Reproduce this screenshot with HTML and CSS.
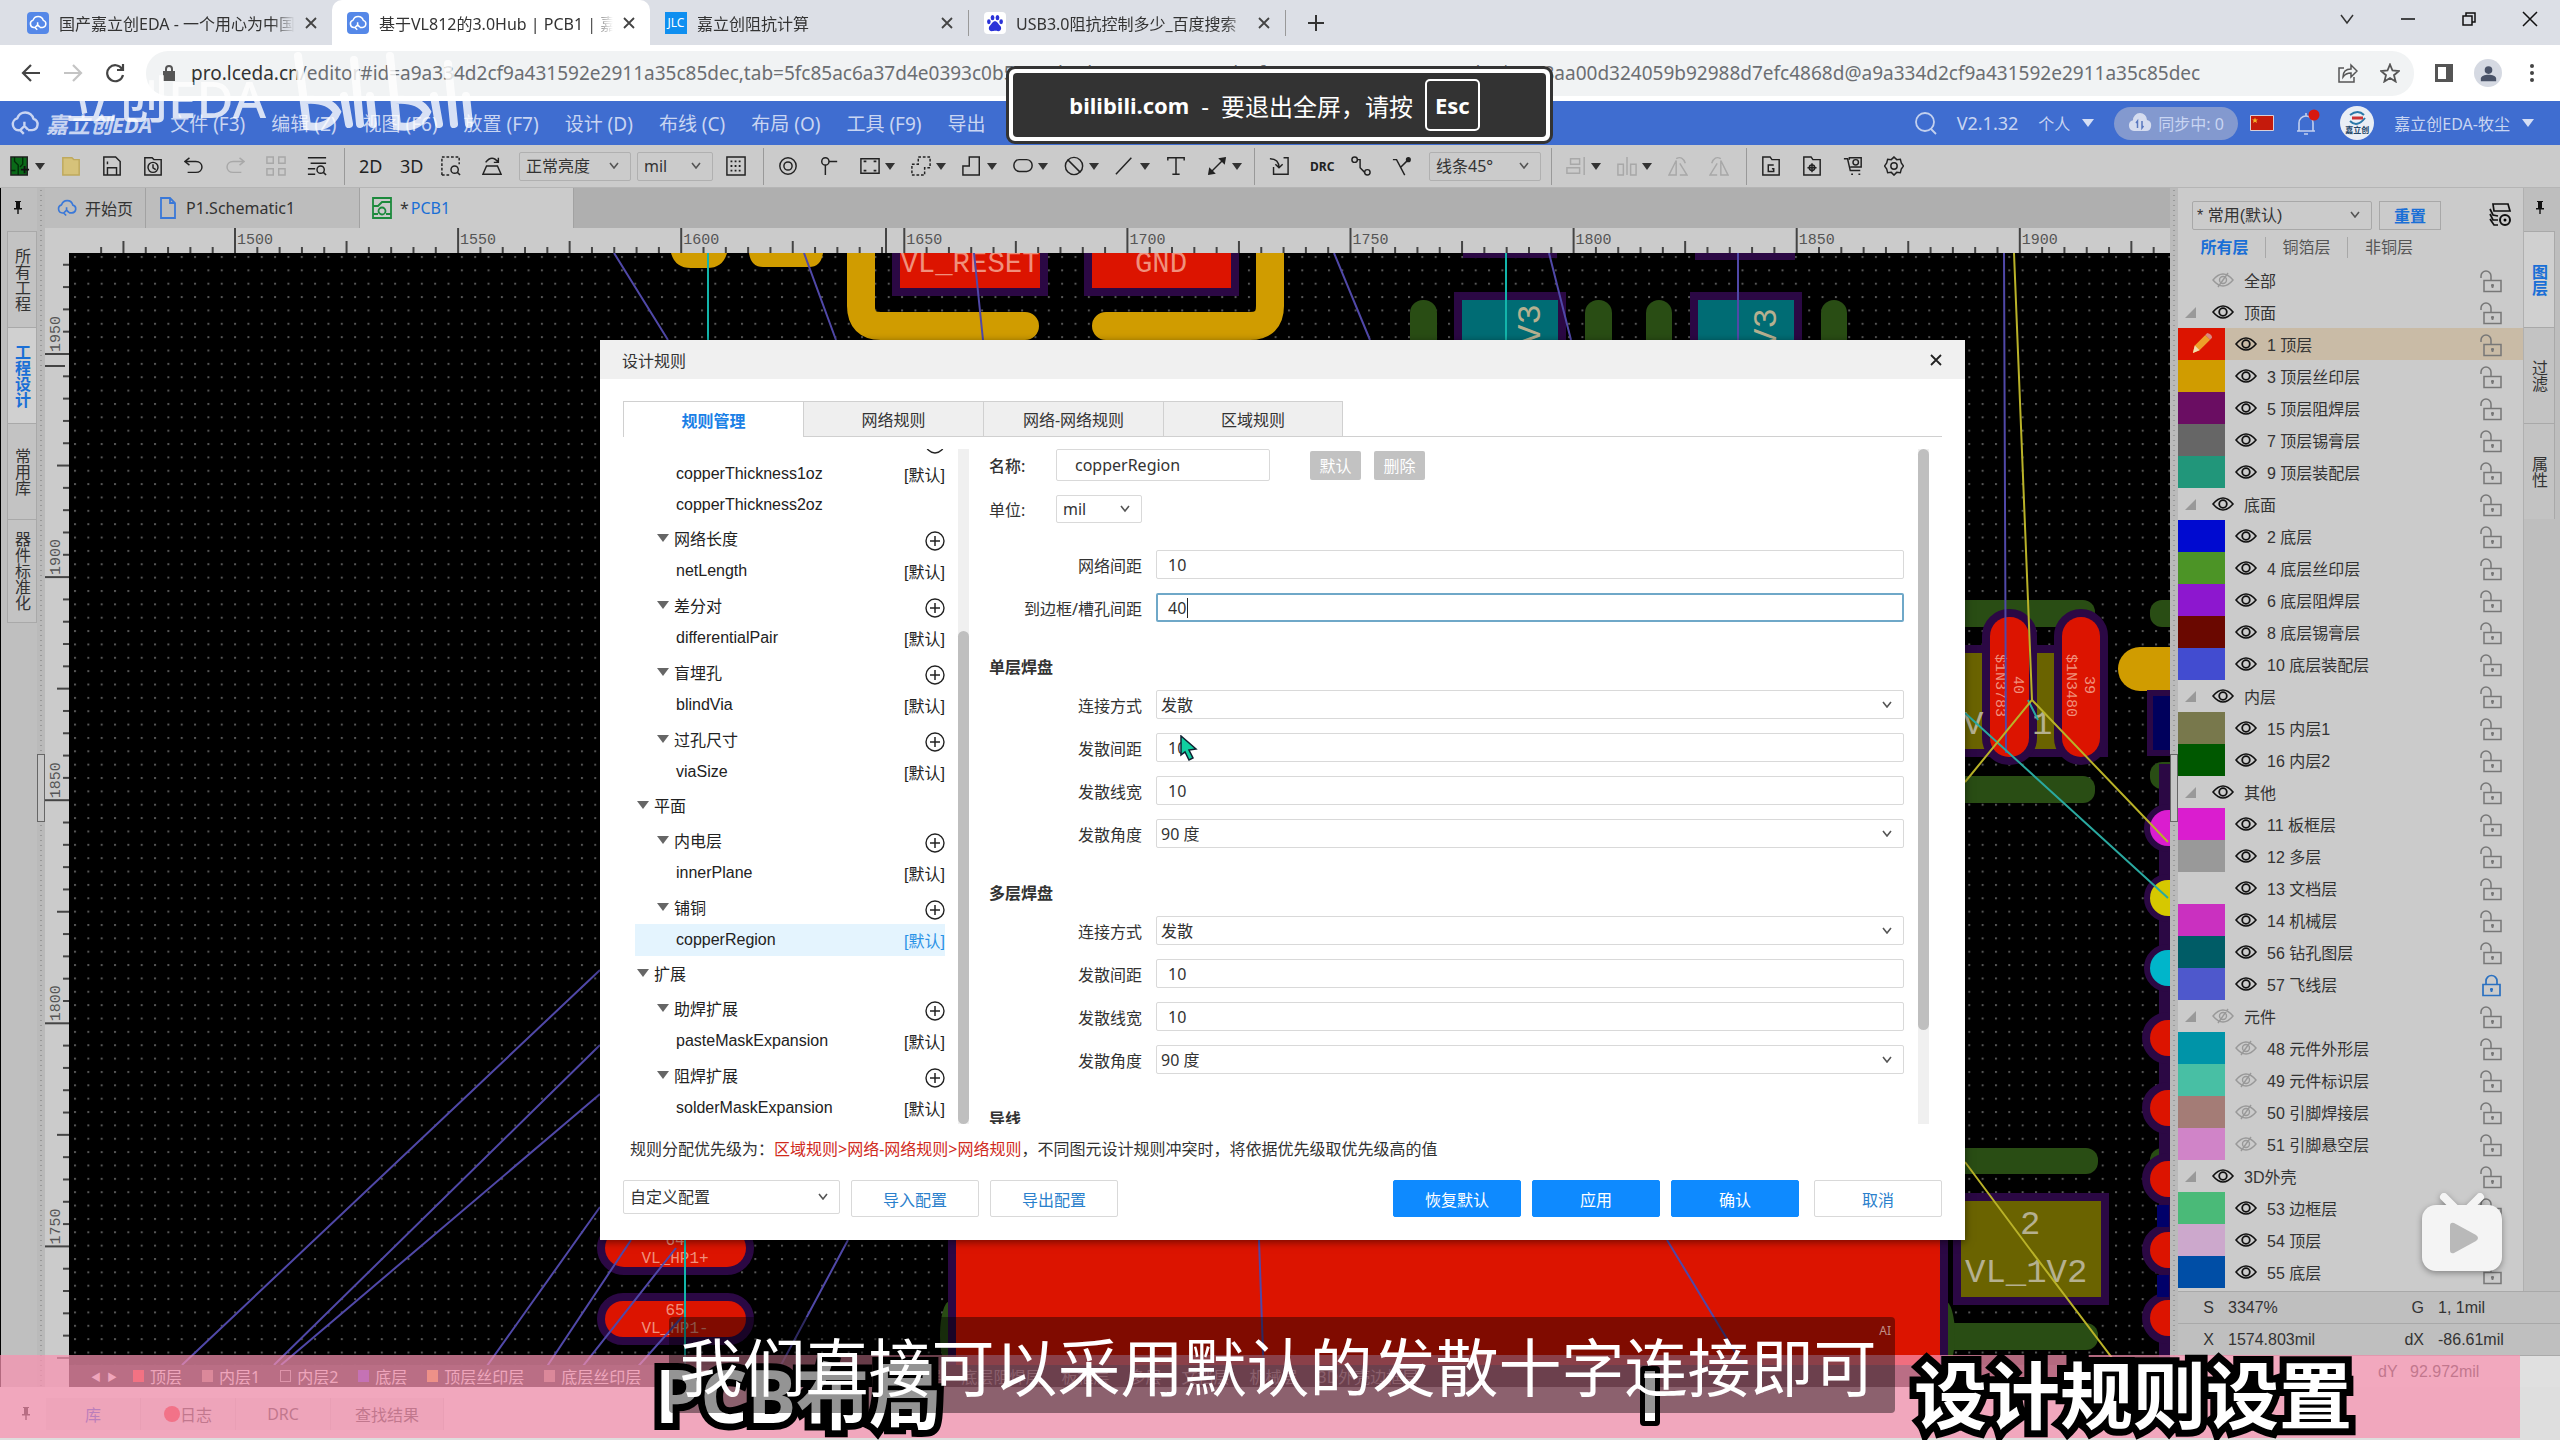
FILE: index.html
```html
<!DOCTYPE html>
<html lang="zh-CN">
<head>
    <meta charset="UTF-8">
    <title>基于VL812的3.0Hub | PCB1 | 嘉立创EDA</title>
    <link rel="stylesheet" href="styles.css">
</head>
<body>
    <!-- icon sprite -->
    <svg class="sprite" aria-hidden="true">
        <symbol id="i-cloud" viewBox="0 0 24 20"><path d="M8 16H6.500a5 5 0 0 1-1-9.800A7 7 0 0 1 19 6.500a4.800 4.800 0 0 1-1 9.400h-3.500M11 19l-3-3 3.500-3.500 3 3M11.500 12.500V9" fill="none" stroke="currentColor" stroke-width="2" stroke-linejoin="round"/></symbol>
        <symbol id="i-eye" viewBox="0 0 22 16"><path d="M1 8Q11-4 21 8Q11 20 1 8Z" fill="none" stroke="currentColor" stroke-width="1.600"/><circle cx="11" cy="8" r="3.800" fill="none" stroke="currentColor" stroke-width="1.800"/></symbol>
        <symbol id="i-eye-off" viewBox="0 0 22 16"><path d="M1 8Q11-4 21 8Q11 20 1 8ZM16 1L6 15" fill="none" stroke="currentColor" stroke-width="1.400"/><circle cx="11" cy="8" r="3.500" fill="none" stroke="currentColor" stroke-width="1.400"/></symbol>
        <symbol id="i-unlock" viewBox="0 0 24 24"><path d="M5 10.500h17v11H5zM2 8V6a5 5 0 0 1 10 0v4.500" fill="none" stroke="currentColor" stroke-width="1.500"/><path d="M13.500 14v4M12 15.500h3" stroke="currentColor" stroke-width="1.800"/></symbol>
        <symbol id="i-lock" viewBox="0 0 24 24"><path d="M4 10.500h17v11H4zM7 10.500V7a5.500 5.500 0 0 1 11 0v3.500" fill="none" stroke="currentColor" stroke-width="1.700"/><path d="M12.500 14v4M11 15.500h3" stroke="currentColor" stroke-width="1.800"/></symbol>
        <symbol id="i-plus" viewBox="0 0 20 20"><circle cx="10" cy="10" r="9" fill="none" stroke="currentColor" stroke-width="1.400"/><path d="M10 5v10M5 10h10" stroke="currentColor" stroke-width="1.500"/></symbol>
        <symbol id="i-close" viewBox="0 0 12 12"><path d="M1 1l10 10M11 1L1 11" stroke="currentColor" stroke-width="1.800"/></symbol>
        <symbol id="i-pin" viewBox="0 0 12 14"><path d="M3 0h6v1H8v6h2v1.500H6.700V13H5.300V8.500H2V7h2V1H3z" fill="currentColor"/></symbol>
    </svg>

    <header class="browser-tabs">
        <a class="browser-tab" href="#"><span class="favicon favicon-eda"><svg><use href="#i-cloud"/></svg></span><span class="tab-title">国产嘉立创EDA - 一个用心为中国人定制</span><svg class="tab-close"><use href="#i-close"/></svg></a>
        <a class="browser-tab active" href="#"><span class="favicon favicon-eda"><svg><use href="#i-cloud"/></svg></span><span class="tab-title">基于VL812的3.0Hub | PCB1 | 嘉立创</span><svg class="tab-close"><use href="#i-close"/></svg></a>
        <a class="browser-tab" href="#"><span class="favicon favicon-jlc">JLC</span><span class="tab-title">嘉立创阻抗计算</span><svg class="tab-close"><use href="#i-close"/></svg></a>
        <a class="browser-tab divided" href="#"><span class="favicon favicon-baidu"><svg viewBox="0 0 22 22"><g fill="#2a32d8"><ellipse cx="8" cy="4.500" rx="2.300" ry="3.200"/><ellipse cx="14" cy="4.500" rx="2.300" ry="3.200"/><ellipse cx="3.500" cy="9.500" rx="2.200" ry="3"/><ellipse cx="18.500" cy="9.500" rx="2.200" ry="3"/><path d="M11 9c3 0 3.500 3 6 5s2 7-2 7c-2 0-2.500-.5-4-.5s-2 .5-4 .5c-4 0-4.500-5-2-7s3-5 6-5z"/></g></svg></span><span class="tab-title">USB3.0阻抗控制多少_百度搜索</span><svg class="tab-close"><use href="#i-close"/></svg></a>
        <button class="new-tab" aria-label="新标签页"><svg viewBox="0 0 16 16"><path d="M8 0v16M0 8h16" stroke="#333" stroke-width="2"/></svg></button>
        <div class="window-buttons">
            <button aria-label="搜索标签页"><svg viewBox="0 0 16 16"><path d="M2 4l6 8 6-8" fill="none" stroke="#333" stroke-width="1.500"/></svg></button>
            <button aria-label="最小化"><svg viewBox="0 0 16 16"><path d="M1 8h14" stroke="#111" stroke-width="1.500"/></svg></button>
            <button aria-label="还原"><svg viewBox="0 0 16 16"><path d="M2 5h9v9H2zM5 5V2h9v9h-3" fill="none" stroke="#111" stroke-width="1.500"/></svg></button>
            <button aria-label="关闭"><svg viewBox="0 0 16 16"><path d="M1 1l14 14M15 1L1 15" stroke="#111" stroke-width="1.500"/></svg></button>
        </div>
    </header>

    <div class="address-bar">
        <button class="nav-btn" aria-label="后退"><svg viewBox="0 0 20 20"><path d="M19 10H2M10 2l-8 8 8 8" fill="none" stroke="#444" stroke-width="2.200"/></svg></button>
        <button class="nav-btn" aria-label="前进"><svg viewBox="0 0 20 20"><path d="M1 10h17M10 2l8 8-8 8" fill="none" stroke="#c4c4c4" stroke-width="2.200"/></svg></button>
        <button class="nav-btn" aria-label="刷新"><svg viewBox="0 0 20 20"><path d="M17 6a8 8 0 1 0 1 6M18 1v6h-6" fill="none" stroke="#444" stroke-width="2.200"/></svg></button>
        <div class="url-box">
            <svg class="url-lock" viewBox="0 0 12 16"><path d="M0 6h12v10H0z" fill="#555"/><path d="M3 7V4a3 3 0 0 1 6 0v3" fill="none" stroke="#555" stroke-width="2"/></svg>
            <span class="url"><b>pro.lceda.cn</b>/editor#id=a9a334d2cf9a431592e2911a35c85dec,tab=5fc85ac6a37d4e0393c0b52837b1d1a5c0@a9a334d2cf9a431592e2911a35c85dec|5228aa00d324059b92988d7efc4868d@a9a334d2cf9a431592e2911a35c85dec</span>
            <svg class="url-icon" viewBox="0 0 20 20"><path d="M6 5H1v14h15v-5M5 14c0-6 4-8 8-8V2l6 6-6 6v-4c-4 0-6 1-8 4z" fill="none" stroke="#555" stroke-width="1.500"/></svg>
            <svg class="url-icon" viewBox="0 0 20 20"><path d="M10 1.500l2.500 6 6.500.5-5 4.200 1.600 6.300L10 15l-5.600 3.500L6 12.200 1 8l6.500-.5z" fill="none" stroke="#555" stroke-width="1.800"/></svg>
        </div>
        <svg class="url-icon" viewBox="0 0 20 20"><path d="M1 1h18v18H1z" fill="#555"/><path d="M4 4h8v12H4z" fill="#fff"/></svg>
        <span class="profile"><svg viewBox="0 0 20 20"><circle cx="10" cy="6" r="4.500" fill="#4a5368"/><path d="M1 19v-3c0-6 18-6 18 0v3z" fill="#4a5368"/></svg></span>
        <svg class="url-icon" viewBox="0 0 20 20"><g fill="#444"><circle cx="10" cy="3" r="2"/><circle cx="10" cy="10" r="2"/><circle cx="10" cy="17" r="2"/></g></svg>
    </div>

    <nav class="menu-bar">
        <a class="brand" href="#"><svg><use href="#i-cloud"/></svg>嘉立创EDA</a>
        <a href="#">文件 (F3)</a>
        <a href="#">编辑 (Z)</a>
        <a href="#">视图 (F6)</a>
        <a href="#">放置 (F7)</a>
        <a href="#">设计 (D)</a>
        <a href="#">布线 (C)</a>
        <a href="#">布局 (O)</a>
        <a href="#">工具 (F9)</a>
        <a href="#">导出</a>
        <div class="account">
            <svg class="search" viewBox="0 0 22 24"><circle cx="10" cy="11" r="9" fill="none" stroke="#c3d0ee" stroke-width="1.800"/><path d="M16 18l5 5" stroke="#c3d0ee" stroke-width="1.800"/></svg>
            <span class="version">V2.1.32</span>
            <span>个人</span><i class="caret light"></i>
            <span class="sync"><svg viewBox="0 0 24 20"><path d="M6 18a5.500 5.500 0 0 1-1-10.800A7 7 0 0 1 19 7a5.600 5.600 0 0 1-1 11z" fill="#d5dcef"/><path d="M9.500 15V8L8 10M14 8v7l1.500-2" stroke="#5a78bf" stroke-width="1.500" fill="none"/></svg>同步中: 0</span>
            <svg class="flag" viewBox="0 0 24 16"><path d="M.5.5h23v15H.5z" fill="#c51a0c" stroke="#d9cfd8"/><path d="M5 2.500l.8 2H8L6.300 5.800 7 8 5 6.700 3 8l.7-2.200L2 4.500h2.200z" fill="#f5b52b"/></svg>
            <svg class="bell" viewBox="0 0 26 28"><path d="M3 22h18M5 22v-8a7 7 0 0 1 14 0v8M10 25h4M12 4v3" fill="none" stroke="#c3d0ee" stroke-width="1.600"/><circle cx="20" cy="6" r="5.500" fill="#d8180f"/></svg>
            <span class="avatar"><svg viewBox="0 0 34 34"><circle cx="17" cy="17" r="17" fill="#e9eef5"/><path d="M10 9q8-6 14 0M10 15q7 7 15-3" fill="none" stroke="#2a78a8" stroke-width="2"/><path d="M12 12h11" stroke="#c33" stroke-width="3"/></svg><small>嘉立创</small></span>
            <span>嘉立创EDA-牧尘</span><i class="caret light"></i>
        </div>
    </nav>

    <div class="toolbar">
        <button class="tool drop" aria-label="新建"><svg viewBox="0 0 22 22"><path d="M1 1h18v20H1z" fill="#0a6a18"/><path d="M5 1v5l4 4v11M14 1v8l-3 3M1 16h5" stroke="#032c08" stroke-width="1.500" fill="none"/><path d="M16 11v8M12 15h9" stroke="#111" stroke-width="2"/></svg></button>
        <button class="tool" aria-label="打开"><svg viewBox="0 0 22 22"><path d="M2 2h10l2 2h6v17H2z" fill="#d6c27a" stroke="#bfa95c"/></svg></button>
        <button class="tool" aria-label="保存"><svg viewBox="0 0 22 22"><path d="M2 1h13l5 5v15H2zM6 21v-8h10v8M6 6v3"/></svg></button>
        <button class="tool" aria-label="项目"><svg viewBox="0 0 22 22"><path d="M2 2h8l2 2h8v17H2z"/><circle cx="11" cy="12.500" r="5.500"/><path d="M11 9v4l3 2"/></svg></button>
        <button class="tool" aria-label="撤销"><svg viewBox="0 0 22 22"><path d="M6 2L1 6l5 4M1 6h12c9 0 9 12 0 12H4"/></svg></button>
        <button class="tool off" aria-label="重做"><svg viewBox="0 0 22 22"><path d="M16 2l5 4-5 4M21 6H9c-9 0-9 12 0 12h9"/></svg></button>
        <button class="tool off" aria-label="网格"><svg viewBox="0 0 22 22"><path d="M1 1h7v7H1zM14 1h7v7h-7zM1 14h7v7H1zM14 14h7v7h-7z"/></svg></button>
        <button class="tool" aria-label="查找"><svg viewBox="0 0 22 22"><path d="M1 2h20M4 8h17M1 14h8M1 20h8"/><circle cx="15" cy="15" r="4"/><path d="M18 18l3 3"/></svg></button>
        <i class="tool-sep"></i>
        <button class="tool text">2D</button>
        <button class="tool text">3D</button>
        <button class="tool" aria-label="框选缩放"><svg viewBox="0 0 22 22"><path d="M1 21V1h19v8M1 21h8" stroke-dasharray="3 2"/><circle cx="15" cy="15" r="4"/><path d="M18 18l3 3"/></svg></button>
        <button class="tool" aria-label="俯视"><svg viewBox="0 0 22 22"><path d="M5 11h12l4 9H1zM4 7q7-9 14 0M18 2v5h-5"/></svg></button>
        <select class="tool-select wide" aria-label="亮度"><option>正常亮度</option></select>
        <select class="tool-select" aria-label="单位"><option>mil</option></select>
        <button class="tool" aria-label="网格设置"><svg viewBox="0 0 22 22"><path d="M1 1h20v20H1z"/><path d="M5 6h13M5 11h13M5 16h13" stroke-dasharray="2 2.500" stroke-width="2"/></svg></button>
        <i class="tool-sep"></i>
        <button class="tool" aria-label="焊盘"><svg viewBox="0 0 22 22"><circle cx="11" cy="11" r="9"/><circle cx="11" cy="11" r="4.500"/></svg></button>
        <button class="tool" aria-label="过孔"><svg viewBox="0 0 22 22"><circle cx="7" cy="6" r="4"/><path d="M7 10v11M11 6h9"/></svg></button>
        <button class="tool drop" aria-label="矩形"><svg viewBox="0 0 22 22"><path d="M1 3h20v16H1z"/><path d="M4 6h3M15 6h3M4 16h3M15 16h3" stroke-width="2"/></svg></button>
        <button class="tool drop" aria-label="铺铜"><svg viewBox="0 0 22 22"><path d="M8 1h13v12h-6v8H1V9h7z" stroke-dasharray="3 2"/></svg></button>
        <button class="tool drop" aria-label="填充"><svg viewBox="0 0 22 22"><path d="M8 1h11v20H1V11h7z"/></svg></button>
        <button class="tool drop" aria-label="槽"><svg viewBox="0 0 22 22"><rect x="1" y="4" width="20" height="13" rx="6"/></svg></button>
        <button class="tool drop" aria-label="禁止区"><svg viewBox="0 0 22 22"><circle cx="11" cy="11" r="9.500"/><path d="M4 4l14 14"/></svg></button>
        <button class="tool drop" aria-label="线条"><svg viewBox="0 0 22 22"><path d="M1 20L18 2"/></svg></button>
        <button class="tool" aria-label="文本"><svg viewBox="0 0 22 22"><path d="M2 5V2h18v3M11 2v18M7 20h8"/></svg></button>
        <button class="tool drop" aria-label="尺寸"><svg viewBox="0 0 22 22"><path d="M3 19L19 3"/><path d="M2 20l1-6 5 5zM20 2l-1 6-5-5z" fill="#222"/></svg></button>
        <i class="tool-sep"></i>
        <button class="tool" aria-label="导入变更"><svg viewBox="0 0 22 22"><path d="M5 12v8h16V2h-5M1 3c7 0 10 3 10 10M7 9l4 4 4-4"/></svg></button>
        <button class="tool text small">DRC</button>
        <button class="tool" aria-label="布线"><svg viewBox="0 0 22 22"><circle cx="4" cy="4" r="3"/><circle cx="18" cy="18" r="3"/><path d="M7 4h3v9l5 5"/></svg></button>
        <button class="tool" aria-label="差分布线"><svg viewBox="0 0 22 22"><path d="M1 4h4l9 17M9 13L18 4"/><circle cx="18" cy="4" r="2" fill="#222"/></svg></button>
        <select class="tool-select wide" aria-label="拐角"><option>线条45°</option></select>
        <i class="tool-sep"></i>
        <button class="tool drop off" aria-label="对齐"><svg viewBox="0 0 22 22"><path d="M5 3h10v6H5zM1 13h14v6H1zM20 1v20"/></svg></button>
        <button class="tool drop off" aria-label="分布"><svg viewBox="0 0 22 22"><path d="M1 9h6v12H1zM15 9h6v12h-6zM11 1v20"/></svg></button>
        <button class="tool off" aria-label="左旋"><svg viewBox="0 0 22 22"><path d="M1 21L9 5v16zM13 21h8L13 8M9 3q7-4 10 5"/></svg></button>
        <button class="tool off" aria-label="右旋"><svg viewBox="0 0 22 22"><path d="M21 21L13 5v16zM9 21H1L9 8M13 3Q6-1 3 8"/></svg></button>
        <i class="tool-sep"></i>
        <button class="tool" aria-label="Gerber"><svg viewBox="0 0 22 22"><path d="M2 1h8l2 3h8v17H2zM14 10H8v7h6v-3h-2"/></svg></button>
        <button class="tool" aria-label="坐标文件"><svg viewBox="0 0 22 22"><path d="M2 1h8l2 3h8v17H2z"/><circle cx="11" cy="13" r="3"/><path d="M11 8v10M6 13h10"/></svg></button>
        <button class="tool" aria-label="下单"><svg viewBox="0 0 22 22"><path d="M1 3h4l3 13h11M7 4V2h13v10H8"/><circle cx="14" cy="7" r="3"/><path d="M9 20h2M17 20h2"/></svg></button>
        <button class="tool" aria-label="设置"><svg viewBox="0 0 22 22"><path d="M11 1l3 3 4-.5 1 4 2.500 3.500L19 14.500l-1 4-4-.5-3 3-3-3-4 .5-1-4L.5 11 3 7.500l1-4L8 4z"/><circle cx="11" cy="11" r="3.500"/></svg></button>
    </div>

    <main class="workspace">
        <aside class="side-left">
            <svg class="pin"><use href="#i-pin"/></svg>
            <button class="side-tab">所有工程</button>
            <button class="side-tab active">工程设计</button>
            <button class="side-tab">常用库</button>
            <button class="side-tab tall">器件标准化</button>
        </aside>
        <div class="splitter"><i class="grip"></i></div>

        <section class="editor">
            <div class="doc-tabs">
                <a class="doc-tab home" href="#"><svg class="blue"><use href="#i-cloud"/></svg>开始页</a>
                <a class="doc-tab" href="#"><svg class="blue" viewBox="0 0 20 22"><path d="M3 1h9l5 5v15H3zM12 1v5h5" fill="none" stroke="currentColor" stroke-width="1.800"/></svg>P1.Schematic1</a>
                <a class="doc-tab active" href="#"><svg class="green" viewBox="0 0 20 22"><path d="M1 1h18v20H1zM1 9h5l4-4h9M1 17h5M19 17h-5" fill="none" stroke="currentColor" stroke-width="1.800"/><circle cx="10" cy="14" r="3.500" fill="none" stroke="currentColor" stroke-width="1.800"/></svg>*<em>PCB1</em></a>
            </div>
            <svg class="ruler-x" id="rulerX"></svg>
            <div class="board-row">
                <svg class="ruler-y" id="rulerY"></svg>
                <svg class="board" role="img" aria-label="PCB 画布">
                    <defs>
                        <pattern id="dots" x="5" y="3" width="13.340" height="13.360" patternUnits="userSpaceOnUse"><path d="M0 0h2v2H0z" fill="#565656"/></pattern>
                    </defs>
                    <rect width="100%" height="100%" fill="#000"/>
                    <rect width="100%" height="100%" fill="url(#dots)"/>
                    <!-- board coordinates start at the window corner -->
                    <g transform="translate(-69 -253)">
                        <g class="silk">
                            <path d="M671 253q4 15 20 15h16q16 0 20-15zM749 253q2 14 14 14h46q12 0 14-14z" fill="#d09c00"/>
                            <path d="M861 240v66q0 20 20 20h144M1270 240v66q0 20-20 20h-144"/>
                        </g>
                        <g class="pad-red">
                            <rect x="900" y="235" width="140" height="53"/>
                            <rect x="1092" y="235" width="139" height="53"/>
                        </g>
                        <g class="pad-text"><text x="970" y="272">VL_RESET</text><text x="1161" y="272">GND</text></g>
                        <g class="pad-green">
                            <rect x="1410" y="300" width="27" height="60" rx="13"/><rect x="1585" y="300" width="27" height="60" rx="13"/>
                            <rect x="1646" y="300" width="26" height="60" rx="13"/><rect x="1821" y="300" width="26" height="60" rx="13"/>
                        </g>
                        <g class="pad-teal"><rect x="1462" y="300" width="96" height="60"/><rect x="1698" y="300" width="96" height="60"/></g>
                        <path d="M1463 253h94v5h-94zM1695 253h100v7h-100z" fill="#2b0844"/>
                        <g class="net-text"><text transform="translate(1540 345) rotate(-90)">V3</text><text transform="translate(1776 349) rotate(-90)">V3</text></g>

                        <g class="pad-green">
                            <rect x="1940" y="600" width="155" height="27" rx="12"/><rect x="1940" y="776" width="155" height="27" rx="12"/>
                            <rect x="2150" y="600" width="40" height="27" rx="12"/><rect x="2150" y="762" width="40" height="27" rx="12"/>
                            <rect x="1940" y="1148" width="158" height="26" rx="12"/><rect x="1940" y="1323" width="158" height="27" rx="12"/>
                            <rect x="2150" y="1148" width="40" height="26" rx="12"/>
                        </g>
                        <g class="pad-olive"><rect x="1930" y="653" width="170" height="96"/></g>
                        <g class="pad-red"><rect x="1990" y="617" width="39" height="140" rx="19"/><rect x="2062" y="617" width="38" height="140" rx="19"/></g>
                        <g class="net-text"><text x="1963" y="734">V</text><text x="2032" y="734">1</text></g>
                        <g class="pin-text"><text transform="translate(1996 654) rotate(90)">$1N3783</text><text transform="translate(2014 676) rotate(90)">40</text><text transform="translate(2067 654) rotate(90)">$1N3480</text><text transform="translate(2085 676) rotate(90)">39</text></g>
                        <rect x="2118" y="647" width="90" height="44" rx="22" fill="#d09c00"/>
                        <path d="M2150 693h30v60h-30z" fill="#00005c" stroke="#2b0844" stroke-width="6"/>
                        <g stroke="#2b0844" stroke-width="12" paint-order="stroke">
                            <path d="M2165 770h10v590h-10z" fill="#2b0844"/>
                            <circle cx="2168" cy="828" r="18" fill="#da1dcf"/><circle cx="2168" cy="898" r="18" fill="#d6c800"/><circle cx="2168" cy="968" r="18" fill="#00b5ca"/>
                        </g>
                        <g class="pad-red"><circle cx="2168" cy="1038" r="18"/><circle cx="2168" cy="1108" r="18"/><circle cx="2168" cy="1179" r="18"/><circle cx="2168" cy="1250" r="18"/><circle cx="2168" cy="1318" r="18"/></g>
                        <path d="M2157 1205h12v22h-12zM2157 1275h12v22h-12z" fill="#00006a"/>

                        <g class="pad-olive"><rect x="1961" y="1201" width="140" height="96"/></g>
                        <g class="net-text big"><text x="2020" y="1234">2</text><text x="1965" y="1282">VL_1V2</text></g>

                        <ellipse cx="950" cy="1335" rx="10" ry="34" fill="#294d14"/><ellipse cx="1945" cy="1335" rx="10" ry="34" fill="#294d14"/>
                        <g class="pad-red"><rect x="956" y="1220" width="984" height="200"/><rect x="605" y="1229" width="141" height="38" rx="19"/><rect x="605" y="1301" width="141" height="36" rx="18"/></g>
                        <g class="pad-text small"><text x="675" y="1245">64</text><text x="675" y="1263">VL_HP1+</text><text x="675" y="1315">65</text><text x="675" y="1333">VL_HP1-</text></g>

                        <g class="ratline">
                            <path d="M614 253l54 87M804 253l32 87M974 253l9 87M1334 253l36 87M1549 253l22 87M1738 253v87M2004 253l2 500"/>
                            <path d="M600 970L182 1365M600 1045L274 1365M600 1094L281 1365M600 1207L477 1380M631 1240L538 1380M676 1248L572 1380M682 1317L626 1380M848 1240L773 1380M1259 1240l5 140M1667 1240l85 140"/>
                        </g>
                        <path d="M708 253v87M685 1240v140M1506 253v87" stroke="#12b5ab" stroke-width="2"/>
                        <path d="M1965 713l203 185M2028 700l10 20" stroke="#2aa9a0" stroke-width="2"/>
                        <path d="M2014 253l18 447-67 82M2032 700l136 142M1965 1162l64 86 139 184" fill="none" stroke="#b9b228" stroke-width="2"/>
                    </g>
                </svg>
            </div>
            <div class="layer-tabs">
                <span class="arrow">◀</span><span class="arrow">▶</span>
                <span><i class="sq red"></i>顶层</span><span><i class="sq olive"></i>内层1</span><span><i class="sq dark"></i>内层2</span><span><i class="sq blue"></i>底层</span><span><i class="sq gold"></i>顶层丝印层</span><span><i class="sq olive"></i>底层丝印层</span><span>顶层锡膏层</span><span>底层锡膏层</span><span>顶层阻焊层</span><span>底层阻焊层</span><span>板框层</span><span>多层</span><span>文档层</span><span>机械层</span><span>3D外壳边框层</span>
            </div>
        </section>

        <div class="splitter"><i class="grip"></i></div>
        <aside class="layers-panel">
            <div class="layers-top">
                <select class="layers-select" aria-label="图层配置"><option>* 常用(默认)</option></select>
                <button class="reset-btn">重置</button>
                <svg class="layers-icon" viewBox="0 0 24 24"><path d="M5 1h15l2 7H6zM2 6l3 6 5 1M2 11l3 6h5M2 16l4 6h4" fill="none" stroke="#111" stroke-width="1.700"/><circle cx="17" cy="17" r="5" fill="none" stroke="#111" stroke-width="2"/><circle cx="17" cy="17" r="1.500"/></svg>
            </div>
            <div class="layers-filter"><a class="active" href="#">所有层</a><a href="#">铜箔层</a><a href="#">非铜层</a></div>
            <ul class="layer-list" id="layerList"></ul>
            <dl class="status">
                <div><dt>S</dt><dd>3347%</dd><dt>G</dt><dd>1, 1mil</dd></div>
                <div><dt>X</dt><dd>1574.803mil</dd><dt>dX</dt><dd>-86.61mil</dd></div>
                <div class="delta-y"><dt>dY</dt><dd>92.972mil</dd></div>
            </dl>
        </aside>
        <aside class="side-right">
            <svg class="pin"><use href="#i-pin"/></svg>
            <button class="side-tab active">图层</button>
            <button class="side-tab">过滤</button>
            <button class="side-tab">属性</button>
        </aside>
    </main>

    <footer class="bottom-panel">
        <svg class="pin"><use href="#i-pin"/></svg>
        <a class="active" href="#">库</a>
        <a href="#"><i class="dot"></i>日志</a>
        <a href="#">DRC</a>
        <a class="long" href="#">查找结果</a>
    </footer>

    <section class="dialog" role="dialog" aria-labelledby="dialogTitle">
        <header class="dialog-head">
            <h2 id="dialogTitle">设计规则</h2>
            <button class="dialog-close" aria-label="关闭"><svg><use href="#i-close"/></svg></button>
        </header>
        <div class="dialog-body">
            <div class="rule-tabs">
                <button class="active">规则管理</button>
                <button>网络规则</button>
                <button>网络-网络规则</button>
                <button>区域规则</button>
            </div>
            <div class="rule-content">
                <ul class="tree">
                    <li class="group"><svg><use href="#i-plus"/></svg></li>
                    <li>copperThickness1oz<span>[默认]</span></li>
                    <li class="plain">copperThickness2oz</li>
                    <li class="group"><i class="caret"></i>网络长度<svg><use href="#i-plus"/></svg></li>
                    <li>netLength<span>[默认]</span></li>
                    <li class="group"><i class="caret"></i>差分对<svg><use href="#i-plus"/></svg></li>
                    <li>differentialPair<span>[默认]</span></li>
                    <li class="group"><i class="caret"></i>盲埋孔<svg><use href="#i-plus"/></svg></li>
                    <li>blindVia<span>[默认]</span></li>
                    <li class="group"><i class="caret"></i>过孔尺寸<svg><use href="#i-plus"/></svg></li>
                    <li>viaSize<span>[默认]</span></li>
                    <li class="root"><i class="caret"></i>平面</li>
                    <li class="group"><i class="caret"></i>内电层<svg><use href="#i-plus"/></svg></li>
                    <li>innerPlane<span>[默认]</span></li>
                    <li class="group"><i class="caret"></i>铺铜<svg><use href="#i-plus"/></svg></li>
                    <li class="selected">copperRegion<span>[默认]</span></li>
                    <li class="root"><i class="caret"></i>扩展</li>
                    <li class="group"><i class="caret"></i>助焊扩展<svg><use href="#i-plus"/></svg></li>
                    <li>pasteMaskExpansion<span>[默认]</span></li>
                    <li class="group"><i class="caret"></i>阻焊扩展<svg><use href="#i-plus"/></svg></li>
                    <li>solderMaskExpansion<span>[默认]</span></li>
                </ul>
                <div class="scrollbar tree-bar"><i></i></div>
                <form class="rule-form">
                    <div class="name-row">
                        <label for="ruleName">名称:</label>
                        <input id="ruleName" type="text" value="copperRegion">
                        <button type="button" class="gray-btn">默认</button>
                        <button type="button" class="gray-btn">删除</button>
                    </div>
                    <div class="unit-row">
                        <label for="unit">单位:</label>
                        <select id="unit"><option>mil</option></select>
                    </div>
                    <div class="field"><label for="netGap">网络间距</label><input id="netGap" type="text" value="10"></div>
                    <div class="field focused"><label for="edgeGap">到边框/槽孔间距</label><input id="edgeGap" type="text" value="40"><i class="text-caret"></i></div>
                    <h3>单层焊盘</h3>
                    <div class="field"><label for="sMode">连接方式</label><select id="sMode"><option>发散</option></select></div>
                    <div class="field"><label for="sGap">发散间距</label><input id="sGap" type="text" value="10"><svg class="mouse" viewBox="0 0 18 26"><path d="M1 1v19l4-3 4 8 4-2-4-8 7-1z" fill="#10cfa0" stroke="#123" stroke-width="1.500"/></svg></div>
                    <div class="field"><label for="sWidth">发散线宽</label><input id="sWidth" type="text" value="10"></div>
                    <div class="field"><label for="sAngle">发散角度</label><select id="sAngle"><option>90 度</option></select></div>
                    <h3>多层焊盘</h3>
                    <div class="field"><label for="mMode">连接方式</label><select id="mMode"><option>发散</option></select></div>
                    <div class="field"><label for="mGap">发散间距</label><input id="mGap" type="text" value="10"></div>
                    <div class="field"><label for="mWidth">发散线宽</label><input id="mWidth" type="text" value="10"></div>
                    <div class="field"><label for="mAngle">发散角度</label><select id="mAngle"><option>90 度</option></select></div>
                    <h3>导线</h3>
                </form>
                <div class="scrollbar form-bar"><i></i></div>
            </div>
            <p class="rule-note">规则分配优先级为：<strong>区域规则&gt;网络-网络规则&gt;网络规则</strong>，不同图元设计规则冲突时，将依据优先级取优先级高的值</p>
            <div class="dialog-foot">
                <select class="config-select" aria-label="配置"><option>自定义配置</option></select>
                <button class="btn">导入配置</button>
                <button class="btn">导出配置</button>
                <span class="spacer"></span>
                <button class="btn primary">恢复默认</button>
                <button class="btn primary">应用</button>
                <button class="btn primary">确认</button>
                <button class="btn cancel">取消</button>
            </div>
        </div>
    </section>

    <!-- video layer -->
    <div class="watermark">
        <span>立创EDA</span>
        <svg viewBox="0 0 186 84"><g fill="none" stroke="#fff" stroke-width="8" stroke-linecap="round"><path d="M6 6l9 70q22 4 30-14-8-14-32-12M52 46l5 28M62 10l6 64M78 46l3 28M98 6l7 70q22 4 30-14-8-14-32-12M142 46l5 28M156 14l6 60M174 46l3 28"/></g></svg>
    </div>
    <div class="chapter-bar">
        <span class="chapter first">PCB布局</span>
        <i class="chapter-mark"></i>
        <span class="chapter last">设计规则设置</span>
    </div>
    <div class="caption">我们直接可以采用默认的发散十字连接即可<small>AI</small></div>
    <button class="play-btn" aria-label="播放"><svg viewBox="0 0 80 80"><path d="M22 4l12 12M58 4L46 16" stroke="#f4f4f4" stroke-width="8" stroke-linecap="round"/><rect y="12" width="80" height="66" rx="14" fill="#f4f4f4"/><path d="M28 33q0-4 4-3l22 12q4 3 0 6L32 60q-4 1-4-3z" fill="#b9b9b9"/></svg></button>
    <div class="fullscreen-tip"><div><b>bilibili.com</b><span>-</span><span>要退出全屏，请按</span><kbd>Esc</kbd></div></div>

    <script src="script.js"></script>
</body>
</html>
```

FILE: styles.css
```css
* {
    box-sizing: border-box;
}
body {
    margin: 0;
    height: 100vh;
    display: flex;
    flex-direction: column;
    position: relative;
    overflow: hidden;
    font-family: "Noto Sans", "Noto Sans CJK SC", sans-serif;
    font-size: 16px;
    color: #333;
    background-color: #cbcbcb;
}
a {
    color: inherit;
    text-decoration: none;
}
button, input, select {
    font: inherit;
    color: inherit;
}
button {
    padding: 0;
    border: none;
    background: none;
    cursor: pointer;
}
select {
    appearance: none;
    border: 1px solid #d9d9d9;
    border-radius: 2px;
    padding: 0 4px;
    background: #fff url("data:image/svg+xml,%3Csvg xmlns='http://www.w3.org/2000/svg' width='10' height='8'%3E%3Cpath d='M1 1l4 5 4-5' fill='none' stroke='%23555' stroke-width='1.600'/%3E%3C/svg%3E") no-repeat right 11px center;
}
ul, dl, dd, h2, h3, p {
    margin: 0;
    padding: 0;
    list-style: none;
}
svg {
    display: block;
    flex: none;
}
.sprite {
    position: absolute;
    width: 0;
    height: 0;
}
.caret {
    flex: none;
    width: 0;
    height: 0;
    border: 6px solid transparent;
    border-top: 8px solid #666;
    border-bottom: 0;
}
.caret.light {
    margin-left: -8px;
    border-top-color: #d5def5;
}
.pin {
    width: 12px;
    height: 14px;
    color: #111;
}

/* browser */
.browser-tabs {
    flex: none;
    display: flex;
    height: 45px;
    background-color: #dcdfe6;
}
.browser-tab {
    display: flex;
    align-items: center;
    width: 318px;
    padding: 0 15px;
    gap: 10px;
    position: relative;
}
.browser-tab:first-child {
    width: 332px;
    padding-left: 27px;
}
.browser-tab.active {
    background-color: #fff;
    border-radius: 10px 10px 0 0;
}
.browser-tab.divided {
    border-left: 1px solid #999;
    border-right: 1px solid #999;
    height: 26px;
    margin-top: 10px;
}
.favicon {
    flex: none;
    width: 22px;
    height: 22px;
    border-radius: 4px;
    display: flex;
    align-items: center;
    justify-content: center;
}
.favicon svg {
    width: 18px;
    height: 18px;
}
.favicon-eda {
    background-color: #5588e8;
    color: #fff;
}
.favicon-jlc {
    background-color: #0f8ff0;
    color: #fff;
    font-size: 12px;
    border-radius: 0;
}
.favicon-baidu {
    background-color: #fff;
}
.tab-title {
    flex: 1;
    overflow: hidden;
    white-space: nowrap;
    mask-image: linear-gradient(to left, transparent, #000 24px);
}
.tab-close {
    width: 12px;
    height: 12px;
    color: #444;
}
.new-tab {
    width: 60px;
}
.new-tab svg {
    width: 16px;
    height: 16px;
    margin: 0 auto;
}
.window-buttons {
    margin-left: auto;
    display: flex;
    height: 38px;
}
.window-buttons button {
    width: 61px;
}
.window-buttons svg {
    width: 16px;
    height: 16px;
    margin: 0 auto;
}
.address-bar {
    flex: none;
    display: flex;
    align-items: center;
    gap: 20px;
    height: 56px;
    padding: 0 18px 0 20px;
    background-color: #fff;
}
.nav-btn svg {
    width: 22px;
    height: 20px;
}
.url-box {
    flex: 1;
    display: flex;
    align-items: center;
    gap: 22px;
    height: 45px;
    padding: 0 14px 0 17px;
    border-radius: 22px;
    background-color: #f1f3f4;
}
.url-lock {
    width: 12px;
    height: 16px;
}
.url {
    flex: 1;
    overflow: hidden;
    white-space: nowrap;
    font-size: 19px;
    color: #6b6e72;
    margin-left: -6px;
}
.url b {
    font-weight: normal;
    color: #333;
}
.url-icon {
    width: 20px;
    height: 20px;
}
.profile {
    width: 28px;
    height: 28px;
    border-radius: 50%;
    background-color: #d5d9e2;
    display: flex;
    align-items: center;
    justify-content: center;
}
.profile svg {
    width: 17px;
    height: 17px;
}

/* app menu */
.menu-bar {
    flex: none;
    display: flex;
    align-items: center;
    gap: 26px;
    height: 44px;
    padding: 0 26px 0 10px;
    background-color: #3f6dd0;
    color: #c9d5f2;
    font-size: 19px;
    white-space: nowrap;
}
.brand {
    display: flex;
    align-items: center;
    gap: 6px;
    font-size: 22px;
    font-style: italic;
    font-weight: bold;
    margin-right: -8px;
}
.brand svg {
    width: 30px;
    height: 24px;
}
.account {
    margin-left: auto;
    display: flex;
    align-items: center;
    gap: 20px;
    font-size: 16px;
}
.search {
    width: 22px;
    height: 24px;
}
.version {
    font-size: 18px;
}
.sync {
    display: flex;
    align-items: center;
    gap: 6px;
    width: 124px;
    height: 33px;
    padding: 0 14px;
    border-radius: 17px;
    background-color: #8399cf;
    margin-right: -8px;
}
.sync svg {
    width: 24px;
    height: 20px;
}
.flag {
    width: 24px;
    height: 16px;
}
.bell {
    width: 26px;
    height: 28px;
}
.avatar {
    position: relative;
    width: 34px;
    height: 34px;
}
.avatar small {
    position: absolute;
    left: 5px;
    bottom: 5px;
    font-size: 8px;
    line-height: 10px;
    font-weight: bold;
    color: #246;
}

/* toolbar */
.toolbar {
    flex: none;
    display: flex;
    align-items: center;
    height: 43px;
    padding-left: 10px;
    border-bottom: 1px solid #b5b5b5;
    background-color: #cbcbcb;
}
.tool {
    flex: none;
    width: 41px;
    color: #222;
    text-align: left;
}
.tool svg {
    width: 20px;
    height: 20px;
    fill: none;
    stroke: #222;
    stroke-width: 1.600;
}
.tool.off svg {
    stroke: #a8a8a8;
}
.tool.drop {
    display: flex;
    align-items: center;
    gap: 5px;
    width: 51px;
}
.tool.drop::after {
    content: "";
    border: 5px solid transparent;
    border-top: 7px solid #333;
    border-bottom: 0;
}
.tool.text {
    font-size: 18px;
}
.tool.text.small {
    font-size: 12px;
    font-weight: bold;
}
.tool-sep {
    flex: none;
    width: 1px;
    height: 37px;
    margin: 0 14px 0 -4px;
    background-color: #999;
}
.tool-select {
    width: 76px;
    height: 29px;
    margin-right: 13px;
    padding: 0 6px;
    background-color: transparent;
    border-color: #b0b0b0;
}
.tool-select.wide {
    width: 112px;
    margin: 0 6px 0 -4px;
}
.tool-select.wide + .tool-sep {
    margin-left: 4px;
}

/* workspace */
.workspace {
    flex: 1;
    min-height: 0;
    display: flex;
    position: relative;
    z-index: 0;
}
.side-left {
    width: 37px;
    padding-left: 6px;
    background-color: #bfbfbf;
    border-left: 1px solid #000;
}
.side-left .pin {
    margin: 13px 0 16px 5px;
}
.side-right {
    width: 37px;
    background-color: #bebebe;
    padding-right: 5px;
    border-left: 1px solid #b0b0b0;
}
.side-right .pin {
    margin: 13px 0 16px 10px;
}
.side-tab {
    display: block;
    width: 100%;
    height: 96px;
    border: 1px solid #a9a9a9;
    border-bottom: none;
    background-color: #c3c3c3;
    writing-mode: vertical-rl;
    text-align: center;
}
.side-tab.tall {
    height: 104px;
    border-bottom: 1px solid #a9a9a9;
}
.side-tab.active {
    background-color: #d0d0d0;
    color: #1a6fd6;
    font-weight: bold;
}
.side-right .side-tab {
    border-left: none;
}
.splitter {
    flex: none;
    width: 8px;
    display: flex;
    align-items: center;
    background: radial-gradient(circle, #999 1px, transparent 1px) 0 0 / 8px 5px #bababa;
}
.grip {
    width: 8px;
    height: 68px;
    border: 1px solid #666;
    background-color: #c6c6c6;
}
.editor {
    flex: 1;
    min-width: 0;
    display: flex;
    flex-direction: column;
}
.doc-tabs {
    flex: none;
    display: flex;
    height: 40px;
    background-color: #afafaf;
}
.doc-tab {
    display: flex;
    align-items: center;
    gap: 8px;
    width: 214px;
    padding-left: 12px;
    border-right: 1px solid #a2a2a2;
    background-color: #bdbdbd;
    white-space: nowrap;
}
.doc-tab.home {
    width: 101px;
}
.doc-tab.active {
    background-color: #cbcbcb;
    gap: 2px;
}
.doc-tab svg {
    width: 20px;
    height: 22px;
}
.doc-tab.active svg {
    margin-right: 6px;
}
.doc-tab em {
    font-style: normal;
    color: #1a6fd6;
}
.blue {
    color: #3a78d8;
}
.green {
    color: #1c8a3c;
}
.ruler-x {
    width: 100%;
    height: 25px;
    background-color: #cbcbcb;
}
.board-row {
    flex: 1;
    min-height: 0;
    display: flex;
}
.ruler-y {
    width: 24px;
    height: 100%;
    background-color: #cbcbcb;
}
.ruler-x line, .ruler-y line {
    stroke: #444;
    stroke-width: 2;
}
.ruler-x text, .ruler-y text {
    font-family: "Liberation Mono", monospace;
    font-size: 15px;
    fill: #555;
}
.board {
    flex: 1;
    min-width: 0;
    height: 100%;
}
.silk {
    fill: none;
    stroke-linecap: round;
}
.silk path:last-child {
    stroke: #d09c00;
    stroke-width: 28;
}
.pad-red {
    fill: #dc1400;
}
.pad-green {
    fill: #294d14;
}
.pad-teal {
    fill: #006c74;
}
.pad-olive {
    fill: #6a6300;
}
.pad-red, .pad-teal, .pad-olive {
    stroke: #2b0844;
    stroke-width: 16;
    paint-order: stroke;
}
.pad-text {
    font-family: "Liberation Mono", monospace;
    font-size: 29px;
    fill: #f0907c;
    text-anchor: middle;
}
.pad-text.small {
    font-size: 16px;
}
.net-text {
    font-family: "Liberation Mono", monospace;
    font-size: 34px;
    fill: #b5b090;
}
.pin-text {
    font-family: "Liberation Mono", monospace;
    font-size: 15px;
    fill: #f0907c;
}
.ratline {
    fill: none;
    stroke: #5048a8;
    stroke-width: 2;
}
.layer-tabs {
    flex: none;
    display: flex;
    align-items: center;
    gap: 20px;
    height: 22px;
    padding-left: 32px;
    overflow: hidden;
    white-space: nowrap;
    background-color: #1b1418;
    color: #d8d8d8;
    border-left: 24px solid #cbcbcb;
}
.layer-tabs span {
    display: flex;
    align-items: center;
    gap: 6px;
}
.layer-tabs .arrow {
    font-size: 10px;
    margin: 0 -4px 0 -10px;
}
.sq {
    width: 11px;
    height: 12px;
}
.sq.red { background-color: #e02010; }
.sq.olive { background-color: #907060; }
.sq.dark { border: 1px solid #999; }
.sq.blue { background-color: #4020c0; }
.sq.gold { background-color: #d09020; }

/* layers panel */
.layers-panel {
    flex: none;
    display: flex;
    flex-direction: column;
    width: 345px;
    background-color: #cbcbcb;
    font-family: "Liberation Sans", "Noto Sans CJK SC", sans-serif;
}
.layers-top {
    display: flex;
    align-items: center;
    gap: 7px;
    height: 42px;
    padding: 12px 11px 0 14px;
}
.layers-select {
    width: 180px;
    height: 29px;
    background-color: transparent;
    border-color: #a8a8a8;
}
.reset-btn {
    width: 62px;
    height: 29px;
    border: 1px solid #a8a8a8;
    color: #1a6fd6;
    font-weight: bold;
}
.layers-icon {
    width: 24px;
    height: 24px;
    margin-left: auto;
}
.layers-filter {
    display: flex;
    align-items: center;
    height: 34px;
    padding-left: 6px;
}
.layers-filter a {
    width: 82px;
    line-height: 21px;
    text-align: center;
    border-right: 1px solid #a8a8a8;
    color: #555;
}
.layers-filter a:last-child {
    border-right: none;
}
.layers-filter .active {
    color: #1a6fd6;
    font-weight: bold;
}
.layer-list {
    flex: 1;
    overflow: hidden;
}
.layer-row {
    display: flex;
    align-items: center;
    height: 32px;
    padding-right: 20px;
}
.layer-row .swatch {
    width: 47px;
    height: 32px;
    margin-right: 10px;
    padding: 4px 12px;
}
.layer-row .fold {
    width: 0;
    height: 0;
    margin: 0 16px 0 7px;
    border-left: 11px solid transparent;
    border-bottom: 11px solid #999;
}
.layer-row .fold.none {
    visibility: hidden;
}
.layer-row .eye {
    width: 22px;
    height: 16px;
    color: #111;
}
.layer-row .eye.off {
    color: #999;
}
.layer-row span {
    flex: 1;
    padding-left: 10px;
}
.layer-row .lock {
    width: 24px;
    height: 24px;
    margin-top: 4px;
    color: #777;
}
.layer-row .lock.on {
    color: #2a70c0;
}
.layer-row.current {
    background-color: #c9bba6;
}
.status {
    flex: none;
    margin-right: -37px;
    z-index: 1;
    background-color: #bfbfbf;
}
.status div {
    display: grid;
    grid-template-columns: 36px 136px 46px 1fr;
    column-gap: 14px;
    align-items: center;
    height: 32px;
    border-top: 1px solid #a9a9a9;
}
.status .delta-y {
    padding-left: 200px;
    grid-template-columns: 18px 1fr;
    background-color: #e0e0e0;
}
.status dt {
    text-align: right;
}

/* bottom panel */
.bottom-panel {
    flex: none;
    display: flex;
    align-items: center;
    height: 53px;
    background-color: #dedede;
}
.bottom-panel .pin {
    margin: 0 14px 0 20px;
}
.bottom-panel a {
    display: flex;
    align-items: center;
    justify-content: center;
    width: 95px;
    height: 32px;
    border-right: 1px solid #c2c2c2;
    background-color: #d2d2d2;
}
.bottom-panel .long {
    width: 113px;
}
.bottom-panel .active {
    color: #1a4fd6;
}
.dot {
    width: 16px;
    height: 16px;
    border-radius: 50%;
    background-color: #e02020;
}

/* design rule dialog */
.dialog {
    position: absolute;
    left: 600px;
    top: 340px;
    width: 1365px;
    background-color: #fff;
    box-shadow: 0 2px 8px rgba(0,0,0,0.5);
}
.dialog-head {
    display: flex;
    align-items: center;
    justify-content: space-between;
    height: 39px;
    padding: 0 23px 0 22px;
    background-color: #f0f0f0;
}
.dialog-head h2 {
    font-size: 16px;
    font-weight: normal;
}
.dialog-close svg {
    width: 12px;
    height: 12px;
    color: #222;
}
.dialog-body {
    padding: 22px 23px 23px;
}
.rule-tabs {
    display: flex;
    border-bottom: 1px solid #d0d0d0;
}
.rule-tabs button {
    width: 180px;
    height: 35px;
    border: 1px solid #d0d0d0;
    border-right: none;
    border-bottom: none;
    background-color: #efefef;
}
.rule-tabs button:last-child {
    border-right: 1px solid #d0d0d0;
}
.rule-tabs .active {
    margin-bottom: -1px;
    height: 36px;
    background-color: #fff;
    color: #1a80e6;
    font-weight: bold;
}
.rule-content {
    display: flex;
    height: 675px;
    margin-top: 12px;
    overflow: hidden;
}
.tree {
    display: flex;
    flex-direction: column;
    justify-content: flex-end;
    width: 322px;
    padding-left: 12px;
    font-family: "Liberation Sans", "Noto Sans CJK SC", sans-serif;
    color: #222;
}
.tree li {
    flex: none;
    display: flex;
    align-items: center;
    height: 32px;
    padding-left: 41px;
}
.tree .plain {
    height: 30px;
}
.tree .group {
    height: 35px;
    padding-left: 22px;
    gap: 5px;
}
.tree .root {
    height: 34px;
    padding-left: 2px;
    gap: 5px;
}
.tree li span, .tree li svg {
    margin-left: auto;
}
.tree li svg {
    width: 20px;
    height: 20px;
    margin-top: 6px;
}
.tree .selected {
    background-color: #e4f4fe;
}
.tree .selected span {
    color: #2a92e6;
}
.scrollbar {
    flex: none;
    width: 11px;
    background-color: #f0f0f0;
}
.scrollbar i {
    display: block;
    border-radius: 6px;
    background-color: #bfbfbf;
}
.tree-bar {
    display: flex;
    align-items: flex-end;
    margin: 0 20px 0 13px;
}
.tree-bar i {
    width: 11px;
    height: 73%;
}
.form-bar {
    margin: 0 13px 0 14px;
}
.form-bar i {
    height: 86%;
}
.rule-form {
    flex: 1;
}
.rule-form input {
    border: 1px solid #d9d9d9;
    border-radius: 2px;
    padding: 0 11px;
    background-color: #fff;
}
.name-row, .unit-row {
    display: flex;
    align-items: center;
}
.name-row {
    margin-bottom: 14px;
    gap: 13px;
}
.name-row label, .unit-row label {
    width: 67px;
}
.name-row label {
    margin-right: -13px;
    font-weight: 500;
}
.name-row input {
    width: 214px;
    height: 32px;
    padding-left: 18px;
    margin-right: 27px;
}
.gray-btn {
    width: 51px;
    height: 29px;
    border-radius: 2px;
    background-color: #c2c2c2;
    color: #fff;
}
.unit-row {
    margin-bottom: 27px;
}
.unit-row select {
    width: 86px;
    height: 28px;
    padding: 0 6px;
}
.field {
    position: relative;
    display: flex;
    align-items: center;
    gap: 14px;
    margin-bottom: 14px;
}
.field label {
    width: 153px;
    text-align: right;
}
.field input, .field select {
    flex: 1;
    height: 29px;
}
.rule-form .focused input {
    border: 2px solid #6fa8c8;
    padding: 0 10px;
}
.text-caret {
    position: absolute;
    left: 198px;
    top: 5px;
    width: 1px;
    height: 20px;
    background-color: #222;
}
.mouse {
    position: absolute;
    left: 191px;
    top: 2px;
    width: 18px;
    height: 26px;
}
.rule-form h3 {
    font-size: 16px;
    line-height: 24px;
    font-weight: bold;
    padding: 19px 0 11px;
}
.rule-note {
    height: 56px;
    padding-left: 7px;
    line-height: 50px;
    white-space: nowrap;
}
.rule-note strong {
    font-weight: normal;
    color: #d02a1c;
}
.dialog-foot {
    display: flex;
    gap: 11px;
}
.config-select {
    width: 217px;
    height: 34px;
    padding: 0 6px;
}
.btn {
    width: 128px;
    height: 37px;
    border: 1px solid #d9d9d9;
    border-radius: 2px;
    background-color: #fff;
    color: #2a80cc;
}
.btn.primary {
    border-color: #0e8aff;
    background-color: #0e8aff;
    color: #fff;
}
.btn.cancel {
    margin-left: 4px;
}
.spacer {
    flex: 1;
}

/* video layer */
.watermark {
    position: absolute;
    left: 66px;
    top: 50px;
    display: flex;
    gap: 26px;
    opacity: 0.8;
    color: #fff;
    font-size: 51px;
    font-weight: 500;
    line-height: 96px;
}
.watermark svg {
    width: 186px;
    height: 84px;
}
.chapter-bar {
    position: absolute;
    left: 0;
    right: 40px;
    bottom: 2px;
    height: 83px;
    background-color: rgba(248,146,176,0.72);
}
.chapter {
    position: absolute;
    bottom: 8px;
    font-size: 73px;
    line-height: 70px;
    font-weight: bold;
    color: #fff;
    -webkit-text-stroke: 14px #000;
    paint-order: stroke fill;
    white-space: nowrap;
}
.chapter.first {
    left: 26%;
}
.chapter.last {
    right: 168px;
}
.chapter-mark {
    position: absolute;
    left: 1640px;
    bottom: 12px;
    width: 20px;
    height: 60px;
    border: 5px solid #000;
    border-radius: 4px;
    background-color: #fff;
}
.caption {
    position: absolute;
    left: 669px;
    bottom: 27px;
    width: 1226px;
    height: 96px;
    padding-right: 8px;
    border-radius: 4px;
    background-color: rgba(0,0,0,0.42);
    color: #fff;
    font-size: 63px;
    line-height: 100px;
    text-align: center;
    white-space: nowrap;
}
.caption small {
    position: absolute;
    right: 4px;
    top: 6px;
    font-size: 12px;
    line-height: 16px;
    color: #c09088;
}
.play-btn {
    position: absolute;
    right: 58px;
    bottom: 167px;
    filter: drop-shadow(0 2px 3px rgba(0,0,0,0.35));
}
.play-btn svg {
    width: 80px;
    height: 80px;
}
.fullscreen-tip {
    position: absolute;
    left: 1006px;
    top: 66px;
    width: 547px;
    height: 78px;
    padding: 4px;
    border: 3px solid #333;
    border-radius: 9px;
    background-color: #fff;
    color: #fff;
    font-size: 24px;
}
.fullscreen-tip div {
    display: flex;
    align-items: center;
    justify-content: center;
    gap: 12px;
    height: 100%;
    padding-right: 10px;
    border-radius: 4px;
    background-color: #333;
    white-space: nowrap;
}
.fullscreen-tip b, .fullscreen-tip kbd {
    font-size: 22px;
}
.fullscreen-tip kbd {
    font-family: inherit;
    font-weight: bold;
    padding: 9px 8px;
    border: 2px solid #fff;
    border-radius: 5px;
}
```

FILE: script.js
```js
// Layers: [name, swatch colour, visible]. Rows without a colour are groups.
const layers = [
    ['全部', null, false], ['顶面', null, true],
    ['1 顶层', '#dc1400', true], ['3 顶层丝印层', '#d09c00', true], ['5 顶层阻焊层', '#6a0d62', true],
    ['7 顶层锡膏层', '#666666', true], ['9 顶层装配层', '#21967a', true],
    ['底面', null, true],
    ['2 底层', '#000ad0', true], ['4 底层丝印层', '#4c9426', true], ['6 底层阻焊层', '#8d17cf', true],
    ['8 底层锡膏层', '#6a0800', true], ['10 底层装配层', '#424cd0', true],
    ['内层', null, true],
    ['15 内层1', '#78784c', true], ['16 内层2', '#005800', true],
    ['其他', null, true],
    ['11 板框层', '#da1dcf', true], ['12 多层', '#999999', true], ['13 文档层', '#cbcbcb', true],
    ['14 机械层', '#ca30c0', true], ['56 钻孔图层', '#005c66', true], ['57 飞线层', '#4e58cc', true],
    ['元件', null, false],
    ['48 元件外形层', '#0094a8', false], ['49 元件标识层', '#48bfa4', false],
    ['50 引脚焊接层', '#a47c76', false], ['51 引脚悬空层', '#d084c8', false],
    ['3D外壳', null, true],
    ['53 边框层', '#4aba78', true], ['54 顶层', '#cca8cc', true], ['55 底层', '#004ea6', true]
];

const pencil = '<svg viewBox="0 0 24 24"><path d="M3 22l2-8L16 3l5 5L10 19z" fill="#eda02a"/><path d="M16 3l2-2q5 1 5 5l-2 2z" fill="#d98880"/><path d="M3 22l2-8 5 5z" fill="#f2dcb0"/></svg>';

document.getElementById('layerList').innerHTML = layers.map(function(layer) {
    const [name, color, visible] = layer;
    const current = name === '1 顶层';
    const locked = name === '57 飞线层';
    const lead = color
        ? `<i class="swatch" style="background-color: ${color}">${current ? pencil : ''}</i>`
        : `<i class="fold ${name === '全部' ? 'none' : ''}"></i>`;
    return `<li class="layer-row ${current ? 'current' : ''}">${lead}
        <svg class="eye ${visible ? '' : 'off'}"><use href="#${visible ? 'i-eye' : 'i-eye-off'}"/></svg>
        <span>${name}</span>
        <svg class="lock ${locked ? 'on' : ''}"><use href="#${locked ? 'i-lock' : 'i-unlock'}"/></svg></li>`;
}).join('');

// Rulers: 50 mil is 223.1px on screen, a tick every 5 mil
const step = 22.31;

let marks = '';
for (let i = -6; i < 90; i++) {
    const x = 190 + i * step;
    const size = i % 10 === 0 ? 25 : (i % 5 === 0 ? 12 : 6);
    if (x < 26) continue;
    marks += `<line x1="${x}" x2="${x}" y1="${25 - size}" y2="25"/>`;
    if (i % 10 === 0) marks += `<text x="${x + 2}" y="16">${1500 + i * 5}</text>`;
}
document.getElementById('rulerX').innerHTML = marks + '<line x1="841" x2="841" y1="0" y2="25"/>';

marks = '';
for (let i = -4; i < 46; i++) {
    const y = 101 + i * step;
    const size = i % 10 === 0 ? 24 : (i % 5 === 0 ? 12 : 6);
    marks += `<line x1="${24 - size}" x2="24" y1="${y}" y2="${y}"/>`;
    if (i % 10 === 0) marks += `<text transform="translate(15 ${y - 2}) rotate(-90)">${1950 - i * 5}</text>`;
}
document.getElementById('rulerY').innerHTML = marks + '<line x1="0" x2="20" y1="113" y2="113"/>';
```
